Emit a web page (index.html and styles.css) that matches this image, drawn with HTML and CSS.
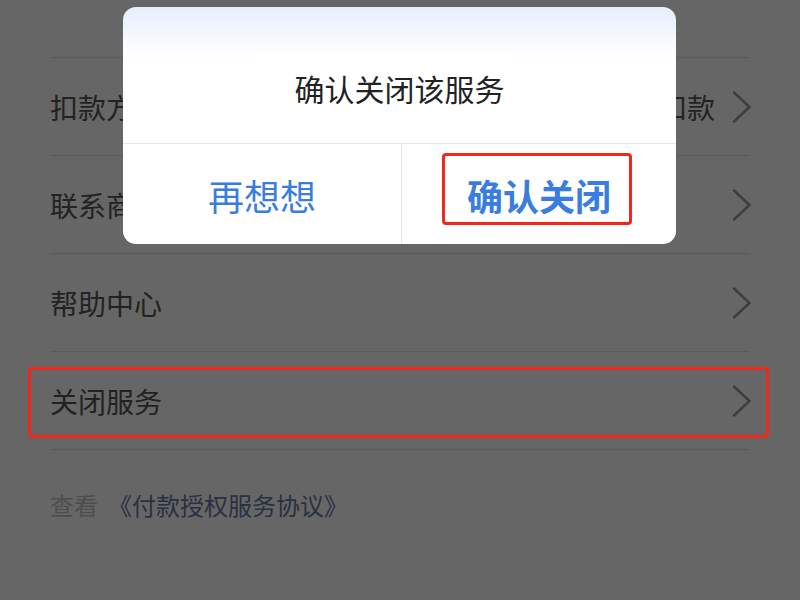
FILE: index.html
```html
<!DOCTYPE html>
<html lang="zh-CN">
<head>
<meta charset="utf-8">
<title>关闭服务</title>
<link rel="stylesheet" href="styles.css">
</head>
<body>
<div class="page">
  <div class="list">
    <div class="top-spacer"></div>
    <div class="row">
      <span class="label">扣款方式</span>
      <span class="right">
        <span class="value">自动扣款</span>
        <svg class="chev" viewBox="0 0 20 32"><path d="M2 1.5 L17.5 16 L2 30.5"/></svg>
      </span>
    </div>
    <div class="row">
      <span class="label">联系商家</span>
      <span class="right">
        <svg class="chev" viewBox="0 0 20 32"><path d="M2 1.5 L17.5 16 L2 30.5"/></svg>
      </span>
    </div>
    <div class="row">
      <span class="label">帮助中心</span>
      <span class="right">
        <svg class="chev" viewBox="0 0 20 32"><path d="M2 1.5 L17.5 16 L2 30.5"/></svg>
      </span>
    </div>
    <div class="row row-marked">
      <span class="label">关闭服务</span>
      <span class="right">
        <svg class="chev" viewBox="0 0 20 32"><path d="M2 1.5 L17.5 16 L2 30.5"/></svg>
      </span>
      <div class="mark mark-row"></div>
    </div>
    <div class="footer">
      <span class="muted">查看</span><span class="link">《付款授权服务协议》</span>
    </div>
  </div>

  <div class="dialog">
    <div class="dialog-title">确认关闭该服务</div>
    <div class="dialog-actions">
      <div class="btn btn-cancel">再想想</div>
      <div class="btn btn-ok">确认关闭<div class="mark mark-btn"></div></div>
    </div>
  </div>
</div>
</body>
</html>
```

FILE: styles.css
```css
* { box-sizing: border-box; }
html, body {
  margin: 0;
  padding: 0;
}
body {
  background: #666666;
  font-family: "Noto Sans CJK SC", "Noto Sans", sans-serif;
}
.page {
  position: relative;
  width: 800px;
  height: 600px;
  overflow: hidden;
  background: #666666;
}
.list {
  padding: 0 50px;
}
.top-spacer {
  height: 58px;
  border-bottom: 1px solid #5b5b5b;
}
.row {
  position: relative;
  height: 98px;
  border-bottom: 1px solid #5b5b5b;
  display: flex;
  align-items: center;
  justify-content: space-between;
  font-size: 28px;
  color: #222222;
}
.label {
  line-height: 40px;
}
.right {
  display: flex;
  align-items: center;
  gap: 17px;
  margin-right: -2px;
}
.value {
  line-height: 40px;
  color: #222222;
}
.chev {
  width: 20px;
  height: 32px;
  display: block;
}
.chev path {
  fill: none;
  stroke: #3d3d3d;
  stroke-width: 2.4;
  stroke-linecap: round;
  stroke-linejoin: miter;
}
.mark {
  position: absolute;
  border: 3px solid #f2281c;
  border-radius: 4px;
}
.mark-row {
  top: 15px;
  bottom: 11px;
  left: -22px;
  right: -19px;
}
.footer {
  padding-top: 40px;
  font-size: 24px;
  line-height: 30px;
}
.muted {
  color: #4e4e4e;
  margin-right: 10px;
}
.link {
  color: #283042;
}
.dialog {
  position: absolute;
  left: 123px;
  top: 7px;
  width: 553px;
  height: 237px;
  border-radius: 13px;
  overflow: hidden;
  background: linear-gradient(to bottom, #e5eefb 0px, #f6f9fe 30px, #ffffff 55px, #ffffff 100%);
  display: flex;
  flex-direction: column;
}
.dialog-title {
  height: 137px;
  padding-top: 61px;
  text-align: center;
  font-size: 30px;
  line-height: 40px;
  color: #222222;
  border-bottom: 1px solid #e6e6e6;
}
.dialog-actions {
  flex: 1;
  display: flex;
}
.btn {
  display: flex;
  align-items: center;
  justify-content: center;
  color: #3a7de0;
  line-height: 44px;
  padding-top: 2px;
}
.btn-cancel {
  width: 279px;
  font-size: 36px;
  border-right: 1px solid #e6e6e6;
}
.btn-ok {
  flex: 1;
  position: relative;
  font-size: 36px;
  font-weight: 700;
}
.mark-btn {
  left: 40px;
  top: 9px;
  width: 190px;
  height: 72px;
}
```
